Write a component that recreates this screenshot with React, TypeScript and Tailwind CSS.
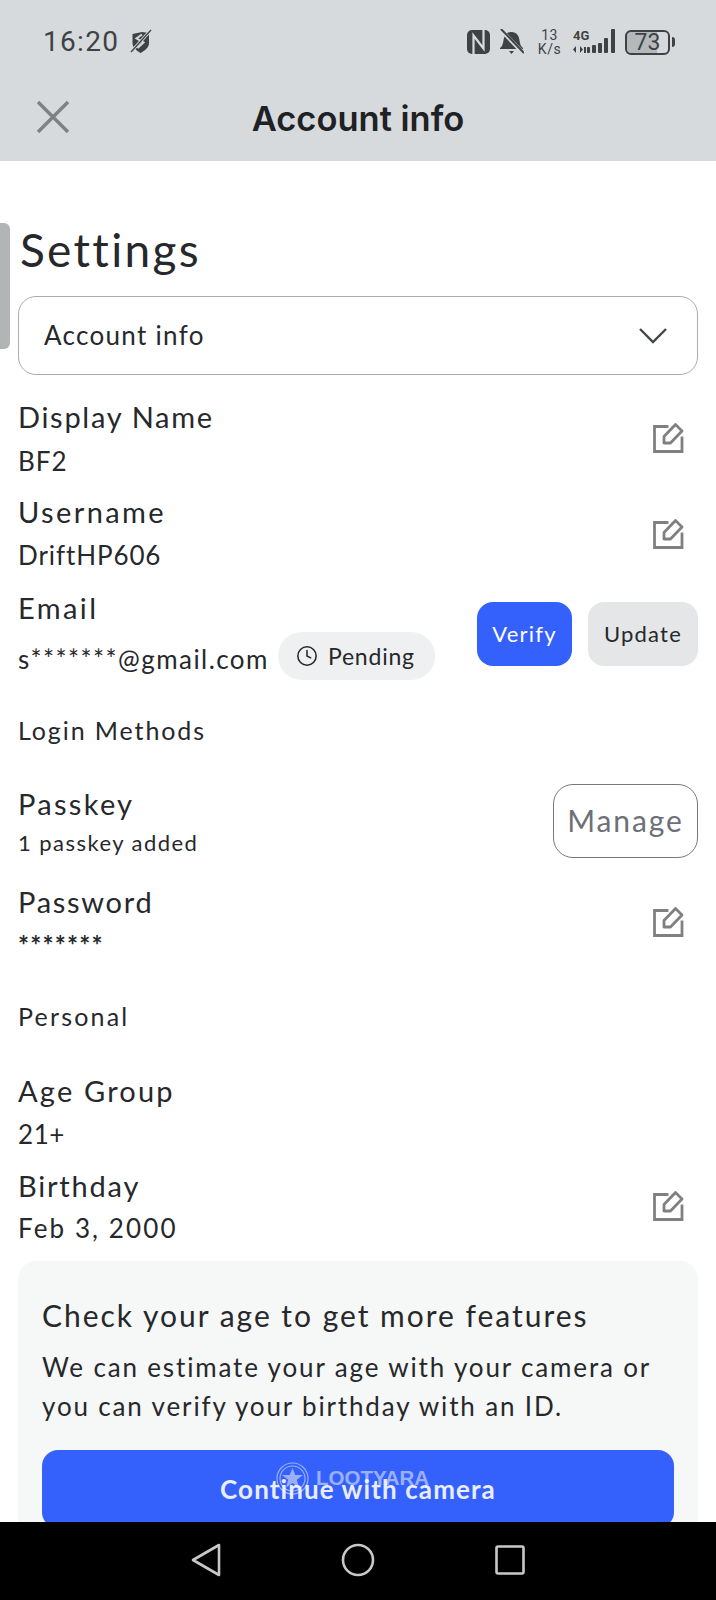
import React from "react";
import { Clock } from "lucide-react";

const bodyFont = "[font-family:Lato,'Noto_Sans',sans-serif]";

function EditIcon({ className = "" }: { className?: string }) {
  return (
    <svg width="32" height="32" viewBox="0 0 32 32" fill="none" stroke="#7f8082" strokeWidth="2.8" className={`shrink-0 ${className}`}>
      <path d="M15 4.500H2.500V29.500H30V16" strokeLinecap="square" />
      <path d="M23.500 2.500L30 9L18.500 21H12V14.500Z" strokeLinejoin="round" />
    </svg>
  );
}

function Label({ children, className = "tracking-[1.7px]" }: { children: React.ReactNode; className?: string }) {
  return <div className={`h-9 text-[29px] leading-[34px] text-[#26282b] ${className}`}>{children}</div>;
}

function Value({ children, className = "" }: { children: React.ReactNode; className?: string }) {
  return <div className={`h-8 text-[26px] leading-[30px] text-[#26282b] ${className}`}>{children}</div>;
}

function StatusBar() {
  return (
    <div className="flex h-[80px] items-start justify-between pl-[43px] pr-[41px] pt-[28px] text-[#3f4245]">
      <div className="flex items-center gap-[12px]">
        <span className="text-[28px] leading-[28px] tracking-[1.3px] [font-family:Roboto,sans-serif]">16:20</span>
        <svg width="22" height="26" viewBox="0 0 22 26" fill="#3f4245" className="-ml-[1px]">
          <path d="M2.500 5L12 3L19 4V14C19 19 14 22 10.500 24C6 21.500 2.500 18 2.500 14Z" fill="#3f4245" />
          <path d="M12 5.500L6.500 9.500L13.500 13.500L7.500 19" fill="none" stroke="#d7dadd" strokeWidth="2" />
          <path d="M1 23L21 1" stroke="#d7dadd" strokeWidth="3" />
          <path d="M1 23L21 1" stroke="#3f4245" strokeWidth="1.300" />
        </svg>
      </div>
      <div className="flex items-center">
        <svg width="23" height="24" viewBox="0 0 23 24" className="mr-[9px]">
          <rect x="0" y="0" width="23" height="24" rx="5" fill="#3f4245" />
          <path d="M6.500 24V5.500L16.500 18.500V0" fill="none" stroke="#d7dadd" strokeWidth="2.200" />
        </svg>
        <svg width="25" height="26" viewBox="0 0 25 26" fill="#3f4245" className="mr-[13px]">
          <path d="M1 19C4 17 4 13 5 9C6 5 9 3 12 3C16 3 19 5 20 9L21 14C21.500 17 23 18 24 19V20H1Z" />
          <path d="M10 22H15L12.500 25Z" />
          <path d="M1 0L25 25" stroke="#d7dadd" strokeWidth="4" />
          <path d="M2 0L25 24" stroke="#3f4245" strokeWidth="2" />
        </svg>
        <div className="mr-[11px] flex w-[25px] flex-col items-center [font-family:Roboto,sans-serif] text-[14px] leading-[14px] tracking-[0.5px]">
          <span>13</span>
          <span>K/s</span>
        </div>
        <div className="relative mr-[10px] h-[26px] w-[42px]">
          <span className="absolute left-0 top-0 [font-family:Roboto,sans-serif] text-[13px] font-bold leading-[13px]">4G</span>
          <svg width="42" height="26" viewBox="0 0 42 26" fill="#3f4245" className="absolute left-0 top-0">
            <path d="M0 20.500L3 17V24ZM7 17V24L10 20.500ZM11 18H13V24H11Z" />
            <rect x="14" y="18" width="3" height="6" rx="1" />
            <rect x="19" y="16" width="4" height="8" rx="1" />
            <rect x="25" y="14" width="4" height="10" rx="1" />
            <rect x="31" y="9" width="4" height="15" rx="1" />
            <rect x="38" y="0" width="4" height="24" rx="1" />
          </svg>
        </div>
        <div className="flex h-[25px] w-[45px] items-center justify-center rounded-[6px] border-2 border-[#3f4245] bg-[linear-gradient(90deg,#b5b8bb_72%,#d7dadd_72%)] [font-family:Roboto,sans-serif] text-[23px] leading-none">
          73
        </div>
        <div className="ml-[2px] h-[10px] w-[3px] rounded-r-sm bg-[#3f4245]" />
      </div>
    </div>
  );
}

export default function App() {
  return (
    <div className={`relative flex h-[1600px] w-[716px] flex-col overflow-hidden bg-white ${bodyFont}`}>
      <header className="h-[161px] shrink-0 bg-[#d7dadd]">
        <StatusBar />
        <div className="relative flex h-[81px] items-center justify-center">
          <svg width="34" height="34" viewBox="0 0 34 34" className="absolute left-[36px] top-[20px]" stroke="#7f8285" strokeWidth="3.4">
            <path d="M2 2L32 32M32 2L2 32" />
          </svg>
          <span className="[font-family:Inter,sans-serif] text-[34.500px] font-semibold text-[#1f2124] -mt-[4px]">Account info</span>
        </div>
      </header>

      <main className="flex-1 overflow-hidden px-[18px]">
        <h1 className="mt-[59px] h-[60px] pl-[2px] text-[46px] leading-[60px] tracking-[2.300px] text-[#26282b]">Settings</h1>
        <div className="mt-[16px] flex h-[79px] items-center justify-between rounded-[18px] border border-[#a9abad] pl-[25px] pr-[29px]">
          <span className="text-[26px] tracking-[1.300px] -mt-[1px] text-[#26282b]">Account info</span>
          <svg width="30" height="18" viewBox="0 0 30 18" fill="none" stroke="#44474a" strokeWidth="2.4">
            <path d="M2 2L15 15L28 2" />
          </svg>
        </div>

        <div className="mt-[25px] flex items-center justify-between pr-[14px]">
          <div>
            <Label>Display Name</Label>
            <Value className="mt-[10px] tracking-[1px]">BF2</Value>
          </div>
          <EditIcon className="mb-[3px]" />
        </div>

        <div className="mt-[17px] flex items-center justify-between pr-[14px]">
          <div>
            <Label className="tracking-[2.400px]">Username</Label>
            <Value className="mt-[9px] tracking-[0.900px]">DriftHP606</Value>
          </div>
          <EditIcon />
        </div>

        <div className="mt-[19px] flex items-start justify-between">
          <div>
            <Label className="tracking-[2.400px]">Email</Label>
            <div className="mt-[5px] flex items-center gap-[9px]">
              <span className="mt-[6px] text-[26px] leading-[30px] tracking-[1.450px] text-[#26282b]">s*******@gmail.com</span>
              <span className="flex h-[48px] w-[157px] items-center justify-center gap-[10px] rounded-full bg-[#eff0f2] pr-[2px] text-[23px] tracking-[0.800px] text-[#26282b]">
                <Clock size={22} strokeWidth={1.7} color="#26282b" />
                Pending
              </span>
            </div>
          </div>
          <div className="mt-[11px] flex gap-[16px]">
            <button className="h-[64px] w-[95px] rounded-[16px] bg-[#3460fb] pb-[2px] text-[22px] tracking-[1.200px] text-white">Verify</button>
            <button className="h-[64px] w-[110px] rounded-[16px] bg-[#e5e6e8] pb-[2px] text-[22px] tracking-[1.200px] text-[#26282b]">Update</button>
          </div>
        </div>

        <div className="mt-[35px] h-8 text-[25px] leading-[30px] tracking-[1.900px] text-[#26282b]">Login Methods</div>

        <div className="mt-[37px] flex items-start justify-between">
          <div className="pt-[3px]">
            <Label className="tracking-[2.300px]">Passkey</Label>
            <div className="mt-[6px] h-7 text-[22px] leading-7 tracking-[1.450px] text-[#26282b]">1 passkey added</div>
          </div>
          <button className="h-[74px] w-[145px] rounded-[20px] border border-[#77797c] pb-[2px] text-[30px] tracking-[1.900px] text-[#6d7079]">Manage</button>
        </div>

        <div className="mt-[27px] flex items-center justify-between pr-[14px]">
          <div>
            <Label>Password</Label>
            <div className="mt-[10px] h-7 text-[26px] font-bold leading-7 tracking-[1.200px] text-[#26282b]">*******</div>
          </div>
          <EditIcon />
        </div>

        <div className="mt-[42px] h-8 text-[25px] leading-[30px] tracking-[2.200px] text-[#26282b]">Personal</div>

        <div className="mt-[41px]">
          <Label className="tracking-[2.200px]">Age Group</Label>
          <Value className="mt-[9px] tracking-[0.600px]">21+</Value>
        </div>

        <div className="mt-[18px] flex items-center justify-between pr-[14px]">
          <div>
            <Label className="tracking-[1.800px]">Birthday</Label>
            <Value className="mt-[8px] tracking-[2.100px]">Feb 3, 2000</Value>
          </div>
          <EditIcon className="mb-[2px]" />
        </div>

        <section className="mt-[16px] rounded-t-[18px] bg-[#f6f7f7] px-[24px] pt-[35px]">
          <h2 className="h-10 text-[30px] leading-[38px] tracking-[1.980px] text-[#26282b]">Check your age to get more features</h2>
          <p className="mt-[12px] text-[26px] leading-[39px] tracking-[1.850px] text-[#26282b]">
            We can estimate your age with your camera or you can verify your birthday with an ID.
          </p>
          <button className="mt-[24px] h-[78px] w-full rounded-[16px] bg-[#3460fb] text-[26px] font-bold tracking-[1.100px] text-[#e9edff]">
            Continue with camera
          </button>
        </section>
      </main>

      <footer className="flex h-[78px] shrink-0 items-center bg-black">
        <div className="relative flex w-full items-center justify-center gap-[120px] -mt-[2px]">
          <svg width="30" height="34" viewBox="0 0 30 34" fill="none" stroke="#c8c8c8" strokeWidth="2.600" strokeLinejoin="round">
            <path d="M28 2V32L2 17Z" />
          </svg>
          <svg width="34" height="34" viewBox="0 0 34 34" fill="none" stroke="#c8c8c8" strokeWidth="2.600">
            <circle cx="17" cy="17" r="15" />
          </svg>
          <svg width="30" height="30" viewBox="0 0 30 30" fill="none" stroke="#c8c8c8" strokeWidth="2.600" strokeLinejoin="round">
            <rect x="1.500" y="1.500" width="27" height="27" rx="1.500" />
          </svg>
        </div>
      </footer>

      <div className="absolute left-0 top-[223px] h-[126px] w-[10px] rounded-r-[6px] bg-[#b2b5b5]" />

      <div className="absolute left-[276px] top-[1462px] flex items-center gap-[7px] opacity-50">
        <svg width="33" height="33" viewBox="0 0 33 33" fill="none" stroke="#ffffff" strokeWidth="1.200">
          <circle cx="16.500" cy="16.500" r="15.500" />
          <circle cx="16.500" cy="16.500" r="12.500" />
          <path d="M16.500 6L19.300 13H27L20.800 17.800L23 25.500L16.500 21L10 25.500L12.200 17.800L6 13H13.700Z" fill="#ffffff" stroke="none" />
        </svg>
        <span className="[font-family:'Liberation_Sans',sans-serif] text-[20.500px] font-bold leading-none text-white">LOOTYARA</span>
      </div>
    </div>
  );
}
